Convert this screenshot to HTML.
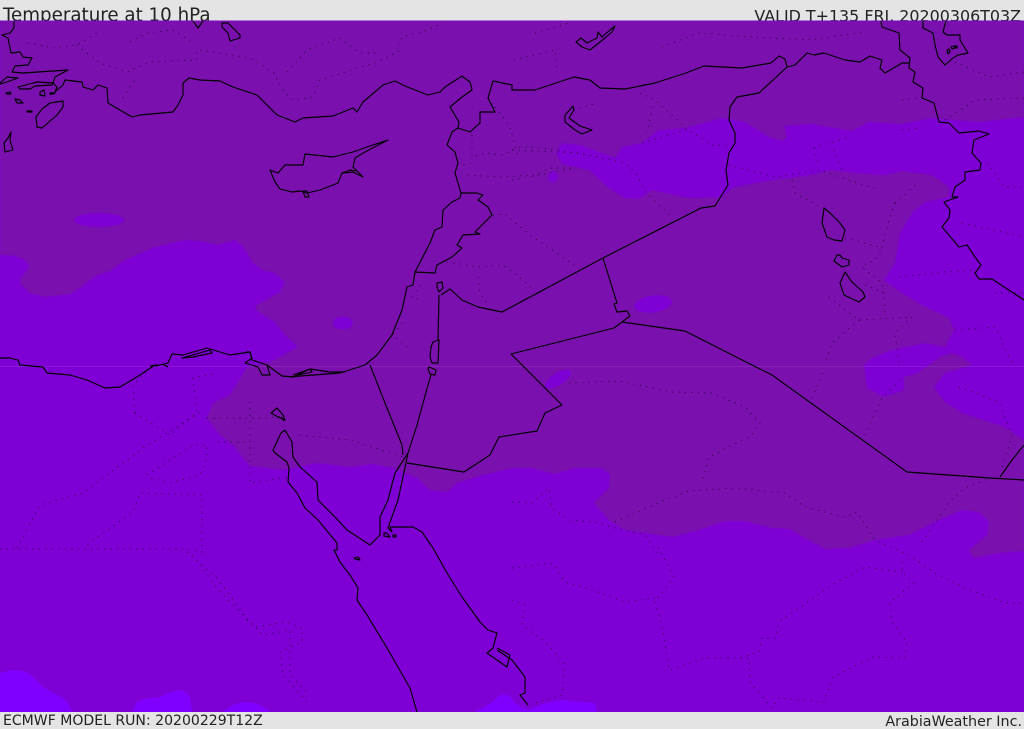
<!DOCTYPE html>
<html><head><meta charset="utf-8"><title>Temperature at 10 hPa</title>
<style>html,body{margin:0;padding:0;background:#e4e4e4}svg{display:block}</style></head>
<body>
<svg xmlns="http://www.w3.org/2000/svg" width="1024" height="729" viewBox="0 0 1024 729">
<rect width="1024" height="729" fill="#e4e4e4"/>
<g font-family="'DejaVu Sans','Liberation Sans',sans-serif" fill="#222">
<text x="3" y="21" font-size="18.250">Temperature at 10 hPa</text>
<text x="1021" y="21.500" font-size="15.900" text-anchor="end">VALID T+135 FRI. 20200306T03Z</text>
<text x="3" y="725" font-size="14.050">ECMWF MODEL RUN: 20200229T12Z</text>
<text x="1022" y="726" font-size="14.300" text-anchor="end">ArabiaWeather Inc.</text>
</g>
<rect x="0" y="21" width="1024" height="691" fill="#7f00d4"/>
<g fill="#8000ff">
<path d="M0 673Q10 670 17 670Q27 671 33 677L43 687L63 698Q70 704 72 712H0Z"/>
<path d="M132 712L137 702Q145 698 160 697Q170 692 178 690Q188 691 190 698L192 712Z"/>
<path d="M223 712Q232 703 245 702Q262 703 270 712Z"/>
<path d="M475 712Q490 705 500 695Q506 693 512 698L514 702Q521 708 529 710Q545 702 559 700L595 703L597 712Z"/>
</g>
<path fill="#7a10ae" stroke="#7c08c2" stroke-width="1" stroke-linejoin="round" d="M0 21H1024V117L979 122L932 118L902 124L869 122L852 131L812 124L784 126L787 137L782 141L769 137L745 122L722 118L685 128L659 130L642 143L622 147L615 158L579 145L562 143L556 153L562 164L589 170L609 188L625 198L639 199L652 190L689 198L722 197L732 188L745 185L772 180L805 176L832 170L855 173L885 175L902 171L932 175L949 187L949 197L925 202L912 213L900 233L895 263L884 280L902 293L922 305L949 318L954 330L945 347L925 343L892 350L872 358L864 365L867 388L884 397L904 390L904 377L917 373L929 365L940 357L952 353L962 357L972 365L945 373L934 387L945 402L962 413L1005 427L1024 440V551L999 553L974 558L969 550L987 535L989 522L979 512L962 510L939 520L909 535L875 540L849 548L825 549L812 542L789 529L772 528L745 521L725 521L699 530L672 537L625 530L609 520L594 503L609 488L610 475L602 468H575L554 474L532 468H512L483 475L457 483L447 492L430 490L417 478L393 468L373 464L350 467L317 463L283 470L250 466L243 458L233 445L220 435L207 418L213 403L230 395L238 382L247 367L270 362L298 347L285 335L275 322L258 312L255 306L280 292L285 282L275 273L262 270L252 262L243 246L235 240L218 245L200 241L185 240L155 247L125 260L110 271L95 276L80 288L70 294L45 297L30 293L20 284L21 277L30 267L24 259L13 255.500L0 255Z"/>
<g fill="#7f00d4">
<ellipse cx="99" cy="220" rx="25" ry="7"/>
<ellipse cx="343" cy="323" rx="10" ry="6.500"/>
<ellipse cx="653" cy="304" rx="19" ry="8.500" transform="rotate(-8 653 304)"/>
<ellipse cx="558" cy="379" rx="15" ry="6" transform="rotate(-32 558 379)"/>
<ellipse cx="553" cy="177" rx="5" ry="5.500"/>
</g>
<rect x="0" y="366" width="1024" height="1" fill="#fff" opacity=".09"/>
<g fill="none" stroke="#000" stroke-width=".9" stroke-dasharray="1 5.500" opacity=".75">
<polyline points="28,43 53,48 77,45 97,33"/>
<polyline points="77,45 100,63 127,72 150,62 197,60 197,50 213,52 250,58 273,72 283,90 293,100 313,97 320,80 377,62 398,52 402,37 427,30 443,23"/>
<polyline points="130,42 147,33 173,30 193,43"/>
<polyline points="287,72 307,50 340,38 360,53 380,53"/>
<polyline points="123,98 137,77"/>
<polyline points="472,135 472,157 487,153 503,155 520,147 540,148 557,150 600,157"/>
<polyline points="457,165 473,163"/>
<polyline points="468,175 500,177 537,175 550,168 577,168"/>
<polyline points="495,107 510,127 518,157"/>
<polyline points="573,110 597,103"/>
<polyline points="493,215 505,214 530,235 577,267"/>
<polyline points="447,262 480,267 503,265 523,280 533,290"/>
<polyline points="478,277 480,293 487,303"/>
<polyline points="420,285 412,297 420,300"/>
<polyline points="402,323 393,335 407,347"/>
<polyline points="535,33 572,22"/>
<polyline points="514,60 555,50 557,68"/>
<polyline points="662,47 699,33 752,37 812,40 865,32"/>
<polyline points="640,93 655,100 685,127"/>
<polyline points="652,107 647,133"/>
<polyline points="512,150 579,153 625,163 637,175 645,192 672,217"/>
<polyline points="642,143 692,128"/>
<polyline points="685,128 712,145 732,146"/>
<polyline points="512,180 539,175 575,168"/>
<polyline points="729,165 775,177 819,170 879,190"/>
<polyline points="814,148 819,167"/>
<polyline points="814,148 849,137"/>
<polyline points="834,150 842,170"/>
<polyline points="792,180 795,193 822,208"/>
<polyline points="895,203 919,182"/>
<polyline points="895,203 889,220 879,257 862,267 882,283 885,313"/>
<polyline points="845,238 879,247"/>
<polyline points="899,277 945,272 979,270"/>
<polyline points="962,223 1024,237"/>
<polyline points="865,285 884,293"/>
<polyline points="829,297 859,320 912,317 895,333 899,363"/>
<polyline points="859,320 832,343 825,363"/>
<polyline points="955,330 995,327 1012,363"/>
<polyline points="995,293 1024,293"/>
<polyline points="902,100 922,98"/>
<polyline points="945,120 975,100 1024,98"/>
<polyline points="955,62 989,77 1024,72"/>
<polyline points="902,130 919,128"/>
<polyline points="987,163 1005,187 1024,187"/>
<polyline points="569,383 619,381 672,392 712,393 745,407 760,423 752,435 709,457 702,482"/>
<polyline points="615,522 665,500 689,491 735,488 785,493 805,507 845,517 857,512 875,540 909,555 935,573 965,588 1005,603 1024,603"/>
<polyline points="922,542 949,502 965,488 990,478"/>
<polyline points="902,562 902,572 914,583 890,602 892,622 907,642 905,658 872,657 832,678 824,702 779,698 772,708 750,682 749,658 705,658 669,670 662,625 655,602 674,577 657,545"/>
<polyline points="902,572 865,567 832,585 779,622 775,638 762,638 759,652 739,658"/>
<polyline points="512,568 552,563 565,582 592,590 625,602 655,598"/>
<polyline points="512,502 532,503 549,488 552,508 569,520 594,522 615,528 645,535 659,555"/>
<polyline points="512,600 525,605 522,625 545,642 564,663 562,695 535,703"/>
<polyline points="812,398 824,370"/>
<polyline points="865,435 882,398 902,378"/>
<polyline points="959,387 999,402 1012,435 1002,468"/>
<polyline points="0,549 187,549 202,552 202,495 140,493 133,512 87,545"/>
<polyline points="17,548 40,505 83,493 143,448 200,412"/>
<polyline points="147,475 193,445 207,445 207,458 200,475 170,483 147,477"/>
<polyline points="135,413 133,385 153,365"/>
<polyline points="135,413 170,435 197,413 193,378 217,373"/>
<polyline points="207,418 267,418 283,416"/>
<polyline points="300,435 350,440 403,457"/>
<polyline points="218,442 248,442"/>
<polyline points="250,402 250,483 287,477"/>
<polyline points="187,552 217,578 253,627 287,622 302,628 302,642 280,652 283,675 310,705"/>
<polyline points="200,565 220,592 263,635 290,630 290,675 307,692"/>
</g>
<g fill="none" stroke="#000" stroke-width="1.150" stroke-linejoin="round">
<path d="M14 21L14 28L10 33L2 35L8 38L11 53L20 52L23 57L32 58L28 65L15 66L12 72L23 73L68 70L55 77L53 83L57 87L55 92L63 85L65 80L82 82L83 87L93 90L98 85L107 88L108 103L120 110L132 117L140 115L173 112L178 105L183 95L183 83L189 78L200 80L220 81L233 87L257 95L267 105L277 115L295 122L303 118L333 116L353 108L357 112L363 102L383 85L395 81L405 86L428 95L440 92L445 87L462 76L470 82L472 90L462 97L450 107L459 122L458 128"/>
<path d="M458 128L470 132L480 123L480 112L495 112L488 98L493 81L512 85L512 90H535L574 77L590 80L600 88L625 89L655 83L686 73L704 66L742 68L771 63L779 56L785 59L787 67L795 65L807 53L814 55L824 53L845 60L860 62L870 56L882 60L880 68L885 73L902 63H910"/>
<path d="M458 128L452 132L447 145L455 152L458 163L455 173L461 193L460 198L452 202L443 210L442 227L435 230L430 243L415 272L413 285L407 287L402 310L392 335L377 355L365 365L340 373L300 376L290 377"/>
<path d="M461 193H477L483 195L478 200L488 207L492 215L475 232L480 234L463 235L457 245L462 248L452 257L437 265L435 273L415 272"/>
<path d="M787 67L759 93L737 97L730 107L729 120L735 133L735 143L729 153L726 170L728 185L715 206L701 208L603 258L502 312L478 307L462 300L450 289L441 295"/>
<path d="M603 258L617 303L614 304L617 312L627 311L630 316L614 328L511 354L562 405L545 413L537 431L499 437L490 455L464 472L407 463"/>
<path d="M622 322L685 331L752 365L772 375L907 472L990 478L1024 480"/>
<path d="M1024 445L1012 460L1000 477"/>
<path d="M881 21L882 27L899 33L900 50L910 58L909 68L915 72L913 82L923 88L922 98L934 103L939 122L949 123L959 133L979 131L989 134L974 140L972 153L981 163L980 170L965 172L965 180L955 187L952 197L958 197L944 202L950 210L949 218L942 227L959 247L967 245L975 257L981 265L975 273L979 279L992 279L1024 300"/>
<path d="M923 21L923 28L933 33L935 45L938 57L945 65L953 58L958 55L968 53L960 40L960 35L947 35L943 32L946 21"/>
<path d="M951 47l3 -1l1 2l-3 1zM947 50l2 -1l1 3l-2 2zM955 46l2 0l0 2l-2 0z"/>
<path d="M615 26L612 32L605 38L590 50L582 47L576 42L581 38L587 43L597 38L598 32L602 37L610 30Z"/>
<path d="M573 106L565 115L565 122L575 130L582 134L592 130L580 126L569 118L574 110Z"/>
<path d="M824 208L822 223L827 237L834 240L842 241L845 230L840 223L830 213Z"/>
<path d="M837 255L834 261L842 267L849 265L849 260L842 258L840 255Z"/>
<path d="M845 272L840 283L844 295L859 302L865 297L863 292L852 282Z"/>
<path d="M270 170L275 182L280 189L292 192L300 191L307 193L320 190L338 183L342 173L353 172L363 177L353 167L355 158L365 152L388 140L367 147L353 152L333 157L305 154L303 165L285 165L278 173Z"/>
<path d="M303 191L305 197H309L307 191ZM342 173L350 170L356 171"/>
<path d="M63 101L50 103L42 109L36 117L37 127L42 128L57 115L63 107Z"/>
<path d="M11 132L8 138L4 143L5 152L13 150L10 140Z"/>
<path d="M0 83L7 77L18 78L7 82L0 84Z"/>
<path d="M18 87L33 83L38 82L53 83L52 85L35 86L30 89L20 89Z"/>
<path d="M6 93L10 92L11 94L7 94ZM15 99L20 100L23 103L17 103ZM27 111L32 111L32 112L27 112ZM40 92L44 90L45 96L40 95ZM50 93L55 93L53 94L50 94Z"/>
<path d="M193 21L198 28L203 21M222 23L228 23L240 35L240 38L230 41L228 33L222 27Z"/>
<path d="M0 358L10 358L18 360L20 365L43 367L47 373L70 375L87 380L105 388L120 387L140 375L155 365L156 366L168 363L172 354L183 355L207 348L220 352L230 355L250 352L252 360L267 365"/>
<path d="M182 358L210 350L212 353L193 357ZM162 364L168 367M150 366L158 365"/>
<path d="M246 352L250 352L252 358L245 363L258 367L262 375L270 375L267 365L282 376L293 377L310 369L330 372L345 372M293 375L310 369L312 372L298 375"/>
<path d="M271 413L277 408L283 415L285 420L278 417ZM281 417L284 421"/>
<path d="M437 283L442 282L443 288L439 292L437 287Z"/>
<path d="M439 295L438 340"/>
<path d="M431 347L430 357L432 363L438 363L439 340L433 342Z"/>
<path d="M429 367L436 370L435 375L430 374L428 369Z"/>
<path d="M431 375L428 385L417 425L408 453"/>
<path d="M370 365L387 408L402 445L403 455"/>
<path d="M285 430L281 433L273 450L275 453L287 462L289 468L288 482L297 493L305 508L318 520L332 537L337 543L337 550L334 550L340 562L346 570L350 575L358 588L357 600L367 615L387 648L410 688L417 712"/>
<path d="M285 430L292 442L293 457L300 467L317 482L318 500L335 517L347 530L370 545L380 535L380 517L388 500L395 473L408 453L403 477L398 500L388 528L392 532L390 527L400 527L413 527L422 532L433 548L447 573L462 597L480 622L488 630L497 633L493 648L487 653L507 667L510 655L497 648"/>
<path d="M497 650L512 660L525 677L525 693L520 695L528 705"/>
<path d="M384 533L387 533L390 537L384 536ZM393 535L396 535L396 537L393 537ZM354 558L358 557L360 560L355 559Z"/>
</g>
</svg>
</body></html>
